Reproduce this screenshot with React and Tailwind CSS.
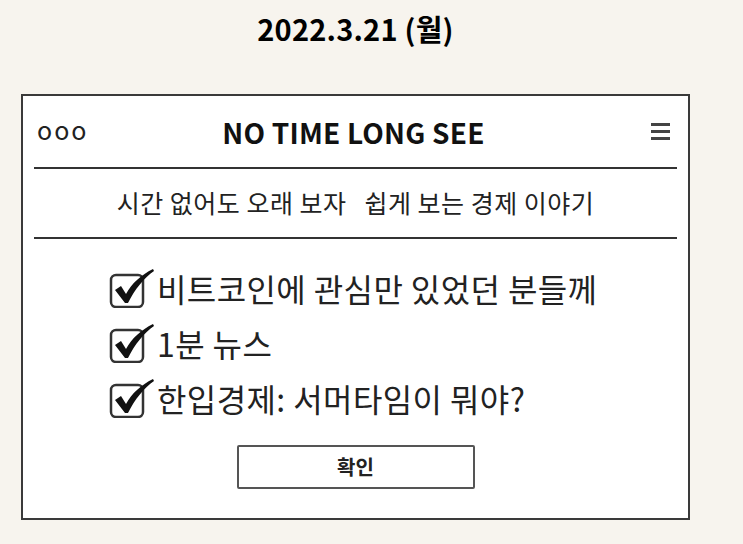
const KR = { fontFamily: '"Noto Sans CJK KR", "Noto Sans", sans-serif' };

function CheckBox() {
  return (
    <svg width="46" height="40" viewBox="0 0 46 40" className="shrink-0">
      <rect x="2" y="7" width="32" height="32" rx="5" fill="none" stroke="#333" strokeWidth="2.5" />
      <path d="M6 22 L12 18 L17 26 C23 15 32 7 44 1 L45 3 C35 10 26 21 19 35 L16 35 Z" fill="#111" />
    </svg>
  );
}

function Burger() {
  return (
    <div className="flex flex-col gap-[4px] w-[19px]">
      <div className="h-[3px] bg-[#444]" />
      <div className="h-[3px] bg-[#444]" />
      <div className="h-[3px] bg-[#444]" />
    </div>
  );
}

const items = ["비트코인에 관심만 있었던 분들께", "1분 뉴스", "한입경제: 서머타임이 뭐야?"];

export default function App() {
  return (
    <div className="w-[743px] h-[544px] bg-[#f7f4ee] overflow-hidden" style={KR}>
      <h1 className="ml-[21px] w-[669px] pt-[7px] h-[94px] text-center text-[29px] font-bold text-black tracking-[0.2px]">
        2022.3.21 (월)
      </h1>

      <div className="ml-[21px] w-[669px] h-[426px] bg-white border-2 border-[#3a3a3a] px-[11px]">
        {/* 상단 타이틀 바 */}
        <div className="grid grid-cols-[1fr_auto_1fr] items-center h-[71px] pl-[3px] pr-[7px]">
          <span className="text-[25px] tracking-[2px] text-[#222] leading-none pb-[4px]">ooo</span>
          <span className="text-[28px] font-semibold text-[#111] tracking-[0.2px]">NO TIME LONG SEE</span>
          <div className="justify-self-end">
            <Burger />
          </div>
        </div>
        <div className="h-[2px] bg-[#333]" />
        <div className="h-[68px] flex items-center justify-center gap-[18px] text-[25px] text-[#222] tracking-[0.5px]">
          <span>시간 없어도 오래 보자</span>
          <span>쉽게 보는 경제 이야기</span>
        </div>
        <div className="h-[2px] bg-[#333]" />

        {/* 체크 목록 */}
        <ul className="pl-[75px] pt-[27px] flex flex-col gap-[11px]">
          {items.map((t) => (
            <li key={t} className="flex items-center gap-[2px] h-[44px] text-[32px] text-[#222] tracking-[0.4px]">
              <CheckBox />
              <span>{t}</span>
            </li>
          ))}
        </ul>

        <div className="flex justify-center pt-[25px]">
          <button className="w-[238px] h-[44px] border-2 border-[#555] rounded-[2px] text-[20px] font-bold text-[#222]">
            확인
          </button>
        </div>
      </div>
    </div>
  );
}
